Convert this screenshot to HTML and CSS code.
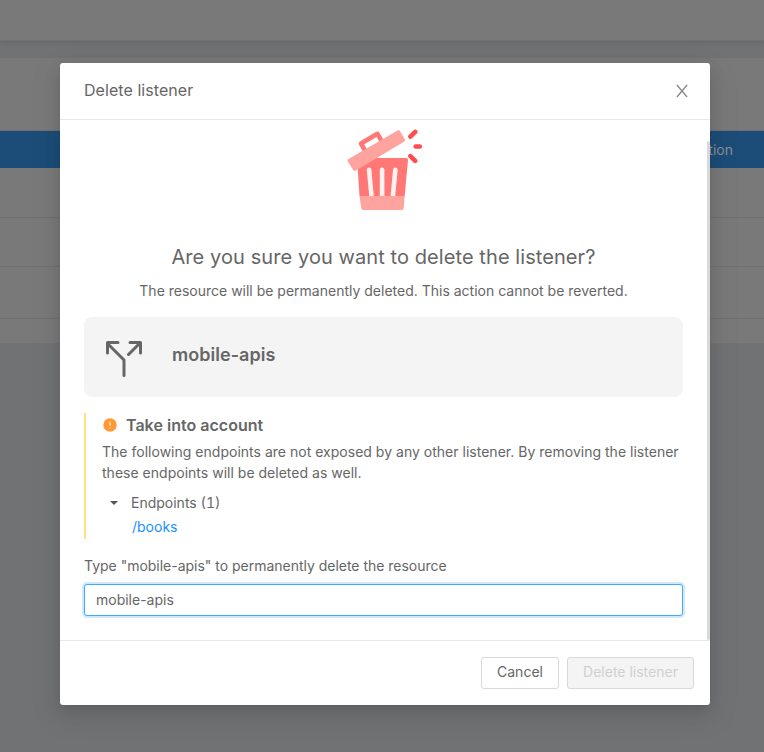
FILE: index.html
```html
<!DOCTYPE html>
<html lang="en">
<head>
<meta charset="utf-8">
<title>Delete listener</title>
<link rel="stylesheet" href="styles.css">
</head>
<body>
<div class="page">
  <div class="topbar"></div>
  <div class="table-card">
    <div class="table-tools"></div>
    <div class="table-head"><span>Action</span></div>
    <div class="row row-first"></div>
    <div class="row row-mid"></div>
    <div class="row row-last"></div>
  </div>
</div>
<div class="overlay">
  <div class="modal" role="dialog">
    <header class="modal-head">
      <h1 class="modal-title">Delete listener</h1>
      <svg class="close" viewBox="0 0 14 14"><path d="M1.9 1 12.1 13M12.1 1 1.9 13"/></svg>
    </header>
    <div class="modal-body">
      <svg class="trash" viewBox="0 0 76 82">
        <path fill="#ff7875" d="M10 29H59.500Q61 29 61 31L57.700 67H12.500Z"/>
        <path fill="#ffa39e" d="M12.500 67H57.700L56.700 79Q56.500 81 54.500 81H16.500Q14.500 81 14.300 79Z"/>
        <g stroke="#fff1f0" stroke-width="4.600" fill="none">
          <path d="M22.100 41 24.500 67M35.100 41V67M48.300 41 45.900 67"/>
          <path stroke-linecap="round" d="M22.100 40.700V41M35.100 40.700V41M48.300 40.700V41"/>
        </g>
        <path d="M18 21.500 14 14.600 30.500 4.800 34.500 11.800" fill="none" stroke="#ff7875" stroke-width="4.600" stroke-linejoin="round"/>
        <path d="M1.200 30.300 50.500 1.600Q52.200.7 53.100 2.200L57.800 10.300Q58.600 11.900 57 12.800L8.800 41.500Q7 42.500 6 40.800L.7 32.300Q0 31 1.200 30.300Z" fill="#ffa39e"/>
        <path d="M63.400 7.600 68.200 2.900M68.700 17.500H72.800M63.400 27.100 68.200 31.800" fill="none" stroke="#ff4d4f" stroke-width="4.600" stroke-linecap="round"/>
      </svg>
      <h2 class="question">Are you sure you want to delete the listener?</h2>
      <p class="explain">The resource will be permanently deleted. This action cannot be reverted.</p>
      <div class="resource">
        <svg class="split" viewBox="0 0 36 36"><path d="M18 34.500V19L2 3M1.500 12V1.500H12M34.500 12V1.500H24M34 2 22.500 13.500"/></svg>
        <span class="resource-name">mobile-apis</span>
      </div>
      <section class="notice">
        <h3 class="notice-title">
          <svg class="warn" viewBox="0 0 14 14"><circle cx="7" cy="7" r="6.700" fill="#ff9933"/><path d="M7 3.600V7.800M7 9.200V10.400" stroke="#ffe3c2" stroke-width="1.200"/></svg>
          <span>Take into account</span>
        </h3>
        <p class="notice-text">The following endpoints are not exposed by any other listener. By removing the listener these endpoints will be deleted as well.</p>
        <div class="endpoints"><i class="caret"></i><span>Endpoints (1)</span></div>
        <a class="endpoint">/books</a>
      </section>
      <label class="label" for="confirm">Type "mobile-apis" to permanently delete the resource</label>
      <input class="confirm" id="confirm" type="text" value="mobile-apis">
      <div class="scrollbar"></div>
    </div>
    <footer class="modal-foot">
      <button class="btn cancel">Cancel</button>
      <button class="btn delete" disabled>Delete listener</button>
    </footer>
  </div>
</div>
</body>
</html>
```
FILE: styles.css
```css
* { box-sizing: border-box; }
body {
  margin: 0;
  height: 752px;
  overflow: hidden;
  background: #717274;
  color: #666;
  font: 14px/22px Inter, "Liberation Sans", sans-serif;
}
h1, h2, h3, p { margin: 0; font-weight: 400; }
.page { height: 752px; }
.topbar {
  height: 41px;
  margin-bottom: 17px;
  background: #797979;
  border-bottom: 1px solid #707070;
  box-shadow: 0 1px 6px rgba(0, 0, 0, .12);
}
.table-card { background: #797979; }
.table-tools { height: 73px; border-bottom: 1px solid #707070; }
.table-head {
  display: flex;
  justify-content: flex-end;
  height: 37px;
  padding: 8px 31px 0 0;
  background: #1c4d78;
  color: #8a8f94;
}
.row { border-bottom: 1px solid #707070; }
.row-first { height: 50px; }
.row-mid { height: 49px; }
.row-last { height: 52px; }
.table-card::after { content: ""; display: block; height: 24px; }
.overlay {
  position: absolute;
  inset: 0;
  padding: 63px 54px 47px 60px;
}
.modal {
  display: flex;
  flex-direction: column;
  width: 650px;
  height: 642px;
  background: #fff;
  border-radius: 3px;
  box-shadow: 0 3px 6px -4px rgba(0, 0, 0, .12), 0 6px 16px rgba(0, 0, 0, .1), 0 9px 28px 8px rgba(0, 0, 0, .05);
}
.modal-head {
  display: flex;
  justify-content: space-between;
  align-items: center;
  height: 57px;
  padding: 0 21px 2px 24px;
  border-bottom: 1px solid #e8e8e8;
}
.modal-title { font-size: 16px; line-height: 22px; letter-spacing: .06px; }
.close { width: 14px; height: 14px; margin-top: 2px; fill: none; stroke: #888; stroke-width: 1.3; }
.modal-body {
  position: relative;
  display: flex;
  flex-direction: column;
  height: 520px;
  padding: 9px 27px 24px 24px;
}
.trash { width: 76px; height: 82px; margin-left: 262.5px; flex: none; }
.question {
  margin-top: 32px;
  font-size: 20px;
  line-height: 28px;
  letter-spacing: .08px;
  text-align: center;
}
.explain { margin-top: 9px; text-align: center; }
.resource {
  display: flex;
  align-items: center;
  flex: none;
  height: 80px;
  margin-top: 15px;
  padding-left: 22px;
  background: #f4f4f4;
  border-radius: 8px;
}
.split {
  width: 36px;
  height: 36px;
  margin: 4px 30px 0 0;
  fill: none;
  stroke: #666;
  stroke-width: 3;
  stroke-linecap: round;
  stroke-linejoin: round;
}
.resource-name { font-size: 18px; font-weight: 600; line-height: 24px; letter-spacing: .03px; margin-top: -5px; }
.notice {
  height: 126px;
  margin-top: 16px;
  padding-left: 16px;
  border-left: 2px solid #ffdf80;
}
.notice-title { display: flex; align-items: center; height: 24px; font-size: 16px; font-weight: 600; letter-spacing: .02px; }
.warn { width: 14px; height: 14px; margin: 0 9px 0 1px; }
.notice-text { margin-top: 4px; line-height: 21px; letter-spacing: .015px; }
.endpoints { display: flex; align-items: center; margin-top: 9px; font-variant-numeric: tabular-nums; }
.caret {
  width: 8px;
  height: 4px;
  margin: 0 13px 0 8px;
  background: #555;
  clip-path: polygon(0 0, 100% 0, 50% 100%);
}
.endpoint { display: block; margin: 2px 0 0 30px; color: #1890ff; }
.label { margin: 16px 0 7px; letter-spacing: -.015px; }
.confirm {
  height: 32px;
  width: 599px;
  padding: 0 11px 2px;
  border: 1px solid #40a9ff;
  border-radius: 3px;
  outline: 0;
  box-shadow: 0 0 0 2px rgba(24, 144, 255, .2);
  color: #666;
  font: inherit;
}
.scrollbar { position: absolute; right: 0; top: 21px; width: 3px; height: 499px; background: #d9d9d9; border-radius: 2px; }
.modal-foot {
  display: flex;
  justify-content: flex-end;
  gap: 8px;
  height: 65px;
  padding: 16px 16px 0;
  border-top: 1px solid #e8e8e8;
}
.btn {
  height: 32px;
  padding: 0 0 2px;
  border: 1px solid #d9d9d9;
  border-radius: 3px;
  background: #fff;
  color: #666;
  font: inherit;
}
.cancel { width: 78px; }
.delete { width: 127px; background: #f4f4f4; color: #d0d0d0; }
```
